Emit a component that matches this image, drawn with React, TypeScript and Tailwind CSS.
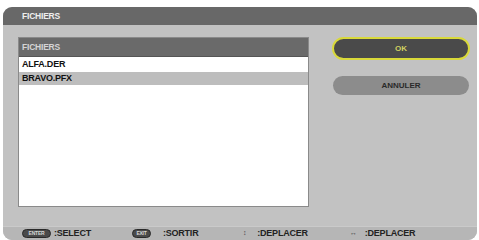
import React from "react";

const font = { fontFamily: '"Liberation Sans", Arial, sans-serif' };

function KeyPill({ label, w }: { label: string; w: string }) {
  return (
    <span
      className={`inline-flex items-center justify-center h-[9px] ${w} rounded-full bg-[#4a4a4a] border border-[#2a2a2a] text-[5px] font-bold text-[#d8d8d8] leading-none`}
    >
      {label}
    </span>
  );
}

export default function App() {
  return (
    <div className="w-[479px] h-[240px] bg-white overflow-hidden pt-[7px] px-[3px]" style={font}>
      <div className="flex flex-col h-[233px] w-[474px] rounded-[9px] overflow-hidden bg-[#c2c2c2]">
        {/* title bar */}
        <div className="h-[18px] bg-[#686868] flex items-center pl-[19px] shrink-0">
          <span className="text-[8.5px] font-bold text-[#eeeeee] tracking-tight">FICHIERS</span>
        </div>

        {/* body */}
        <div className="flex flex-1 pl-[15px] pt-[12px]">
          <div className="w-[291px] h-[170px] bg-white border border-[#8a8a8a] flex flex-col">
            <div className="h-[19px] bg-[#6a6a6a] flex items-center pl-[3px] border-b border-[#555]">
              <span className="text-[8.5px] font-bold text-[#d4d4d4] tracking-tight">FICHIERS</span>
            </div>
            <div className="h-[15px] flex items-center pl-[3px] bg-white">
              <span className="text-[9px] font-bold text-[#111] tracking-tight">ALFA.DER</span>
            </div>
            <div className="h-[13px] flex items-center pl-[3px] bg-[#bdbdbd]">
              <span className="text-[9px] font-bold text-[#111] tracking-tight">BRAVO.PFX</span>
            </div>
          </div>

          <div className="flex flex-col ml-[23px] w-[138px]">
            <div className="h-[23px] rounded-full bg-[#4a4a4a] border-2 border-[#d9d93a] flex items-center justify-center">
              <span className="text-[8px] font-bold text-[#d0d060]">OK</span>
            </div>
            <div className="h-[19px] mt-[16px] mx-[1px] rounded-full bg-[#8c8c8c] flex items-center justify-center">
              <span className="text-[8px] font-bold text-[#2a2a2a]">ANNULER</span>
            </div>
          </div>
        </div>

        {/* footer */}
        <div className="h-[14px] shrink-0 bg-[#b6b6b6] border-t border-[#cacaca] flex items-center text-[9px] font-bold text-[#222] tracking-tight">
          <div className="flex items-center ml-[19px] w-[110px] gap-[3px]">
            <KeyPill label="ENTER" w="w-[29px]" />
            <span>:SELECT</span>
          </div>
          <div className="flex items-center w-[111px] gap-[12px]">
            <KeyPill label="EXIT" w="w-[19px]" />
            <span>:SORTIR</span>
          </div>
          <div className="flex items-center w-[107px] gap-[11px]">
            <span className="text-[7px] text-[#444]">↕</span>
            <span>:DEPLACER</span>
          </div>
          <div className="flex items-center gap-[8px]">
            <span className="text-[7px] text-[#444]">↔</span>
            <span>:DEPLACER</span>
          </div>
        </div>
      </div>
    </div>
  );
}
